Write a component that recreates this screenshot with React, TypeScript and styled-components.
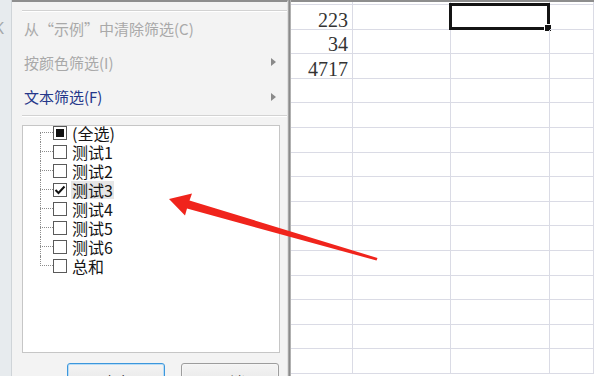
import React from "react";
import styled, { createGlobalStyle } from "styled-components";

const Global = createGlobalStyle`
  html, body { margin: 0; padding: 0; background: #fff; }
  body { width: 594px; height: 376px; overflow: hidden; font-family: "Noto Sans CJK SC", "Noto Sans", sans-serif; }
  #root { width: 594px; height: 376px; }
`;

const Screen = styled.div`
  position: relative;
  width: 594px;
  height: 376px;
  overflow: hidden;
  display: flex;
  flex-direction: row;
  background: #fff;
`;

const LeftStrip = styled.div`
  width: 12px;
  flex: none;
  background: #e7ebee;
  border-right: 1px solid #cfd4d8;
  box-sizing: border-box;
  overflow: hidden;
  padding-top: 18px;
`;

const StripGlyph = styled.span`
  display: block;
  margin-left: -6px;
  font-family: "Noto Sans", sans-serif;
  font-size: 16px;
  color: #a4a8ab;
  line-height: 20px;
`;

const Panel = styled.div`
  width: 276px;
  flex: none;
  box-sizing: border-box;
  background: #f3f3f3;
  border-top: 2px solid #8e8e8e;
  border-right: 1px solid #e2e2e2;
  display: flex;
  flex-direction: column;
  padding-left: 10px;
  & > * { flex: none; }
`;

const Separator = styled.div<{ $top: number }>`
  margin-top: ${(p) => p.$top}px;
  height: 1px;
  background: #d2d2d2;
  border-bottom: 1px solid #ffffff;
`;

const MenuItem = styled.div<{ $active?: boolean; $h: number }>`
  height: ${(p) => p.$h}px;
  box-sizing: border-box;
  display: flex;
  align-items: center;
  justify-content: space-between;
  padding: 0 11px 2px 2px;
  font-size: 15px;
  color: ${(p) => (p.$active ? "#25378a" : "#a9a9a9")};
  white-space: nowrap;
`;

const SubArrow = styled.span`
  width: 0;
  height: 0;
  border-top: 4px solid transparent;
  border-bottom: 4px solid transparent;
  border-left: 5px solid #8a8a8a;
`;

const ListBox = styled.div`
  margin-top: 8px;
  width: 258px;
  height: 228px;
  box-sizing: border-box;
  background: #fff;
  border: 1px solid #c6c6c6;
  overflow: hidden;
`;

const Tree = styled.div`
  margin-top: -3px;
  display: flex;
  flex-direction: column;
`;

const TreeRow = styled.div`
  height: 19px;
  display: flex;
  align-items: center;
  flex: none;
`;

const Gutter = styled.div<{ $first?: boolean; $last?: boolean }>`
  position: relative;
  width: 30px;
  height: 19px;
  flex: none;
  &::before {
    content: "";
    position: absolute;
    left: 17px;
    top: ${(p) => (p.$first ? "10px" : "0")};
    bottom: ${(p) => (p.$last ? "9px" : "0")};
    border-left: 1px dotted #8c8c8c;
  }
  &::after {
    content: "";
    position: absolute;
    left: 17px;
    right: 0;
    top: 9px;
    border-top: 1px dotted #8c8c8c;
  }
`;

const Box = styled.span`
  position: relative;
  width: 14px;
  height: 14px;
  box-sizing: border-box;
  border: 1px solid #5a5a5a;
  background: #fff;
  flex: none;
  display: flex;
  align-items: center;
  justify-content: center;
`;

const Indeterminate = styled.span`
  width: 8px;
  height: 8px;
  background: #111;
`;

const Label = styled.span<{ $selected?: boolean }>`
  display: inline-block;
  height: 18px;
  margin-left: 4px;
  padding: 0 1px;
  font-size: 16px;
  line-height: 18px;
  color: #151515;
  background: ${(p) => (p.$selected ? "#e6e6e6" : "transparent")};
  white-space: nowrap;
`;

const Buttons = styled.div`
  margin-top: 10px;
  display: flex;
  gap: 16px;
  padding-left: 45px;
`;

const Button = styled.div<{ $primary?: boolean }>`
  width: 98px;
  height: 28px;
  box-sizing: border-box;
  border-radius: 3px;
  border: 1px solid ${(p) => (p.$primary ? "#3c97dc" : "#9d9d9d")};
  box-shadow: inset 0 0 0 1px ${(p) => (p.$primary ? "#b8dcf6" : "#f6f6f6")};
  background: linear-gradient(#f4f4f4, #e4e4e4);
  display: flex;
  justify-content: center;
  padding-top: 8px;
  font-size: 15px;
  line-height: 20px;
  color: #222;
`;

const PanelEdge = styled.div`
  width: 3px;
  flex: none;
  background: linear-gradient(to right, #b4b4b4, #8a8a8a, #c4c4c4);
`;

const Sheet = styled.div`
  flex: 1;
  display: grid;
  grid-template-columns: 62px 98px 99px 1fr;
  grid-template-rows: 3px repeat(15, 24.6px);
  border-top: 2px solid #8e8e8e;
  align-content: start;
`;

const Cell = styled.div`
  position: relative;
  box-sizing: border-box;
  border-right: 1px solid #dadbe5;
  border-bottom: 1px solid #dadbe5;
  display: flex;
  align-items: flex-end;
  justify-content: flex-end;
  padding: 0 4px 0 0;
  font-family: "Liberation Serif", "DejaVu Serif", serif;
  font-size: 20px;
  line-height: 17px;
  color: #333;
`;

const Selection = styled.div`
  position: absolute;
  left: -2px;
  top: -2px;
  right: -1px;
  bottom: -1px;
  border: 3px solid #141414;
`;

const Handle = styled.div`
  position: absolute;
  right: -5px;
  bottom: -5px;
  width: 6px;
  height: 6px;
  background: #141414;
  border: 1px solid #fff;
`;

const ArrowLayer = styled.svg`
  position: absolute;
  left: 0;
  top: 0;
  width: 594px;
  height: 376px;
  pointer-events: none;
`;

const items: { label: string; state: "none" | "checked" | "mixed" }[] = [
  { label: "(全选)", state: "mixed" },
  { label: "测试1", state: "none" },
  { label: "测试2", state: "none" },
  { label: "测试3", state: "checked" },
  { label: "测试4", state: "none" },
  { label: "测试5", state: "none" },
  { label: "测试6", state: "none" },
  { label: "总和", state: "none" },
];

const values: Record<number, string> = { 1: "223", 2: "34", 3: "4717" };

export default function App() {
  const rows = Array.from({ length: 16 }, (_, i) => i);
  return (
    <>
      <Global />
      <Screen>
        <LeftStrip>
          <StripGlyph>K</StripGlyph>
        </LeftStrip>
        <Panel>
          <Separator $top={8} />
          <MenuItem $h={34}>从“示例”中清除筛选(C)</MenuItem>
          <MenuItem $h={34}>
            <span>按颜色筛选(I)</span>
            <SubArrow />
          </MenuItem>
          <MenuItem $h={35} $active>
            <span>文本筛选(F)</span>
            <SubArrow />
          </MenuItem>
          <Separator $top={0} />
          <ListBox>
            <Tree>
              {items.map((it, i) => (
                <TreeRow key={it.label}>
                  <Gutter $first={i === 0} $last={i === items.length - 1} />
                  <Box>
                    {it.state === "mixed" && <Indeterminate />}
                    {it.state === "checked" && (
                      <svg width="12" height="12" viewBox="0 0 12 12">
                        <path d="M1.5 6 L4.5 9 L10.5 2.5" fill="none" stroke="#111" strokeWidth="2" />
                      </svg>
                    )}
                  </Box>
                  <Label $selected={it.state === "checked"}>{it.label}</Label>
                </TreeRow>
              ))}
            </Tree>
          </ListBox>
          <Buttons>
            <Button $primary>确定</Button>
            <Button>取消</Button>
          </Buttons>
        </Panel>
        <PanelEdge />
        <Sheet>
          {rows.map((r) =>
            [0, 1, 2, 3].map((c) => (
              <Cell key={`${r}-${c}`}>
                {c === 0 && values[r]}
                {r === 1 && c === 2 && (
                  <Selection>
                    <Handle />
                  </Selection>
                )}
              </Cell>
            ))
          )}
        </Sheet>
        <ArrowLayer viewBox="0 0 594 376">
          <polygon
            points="169,199 192,193.5 189.5,200.5 377.5,258 376.5,260.5 187,208.5 185,215.5"
            fill="#f0241c"
          />
        </ArrowLayer>
      </Screen>
    </>
  );
}
